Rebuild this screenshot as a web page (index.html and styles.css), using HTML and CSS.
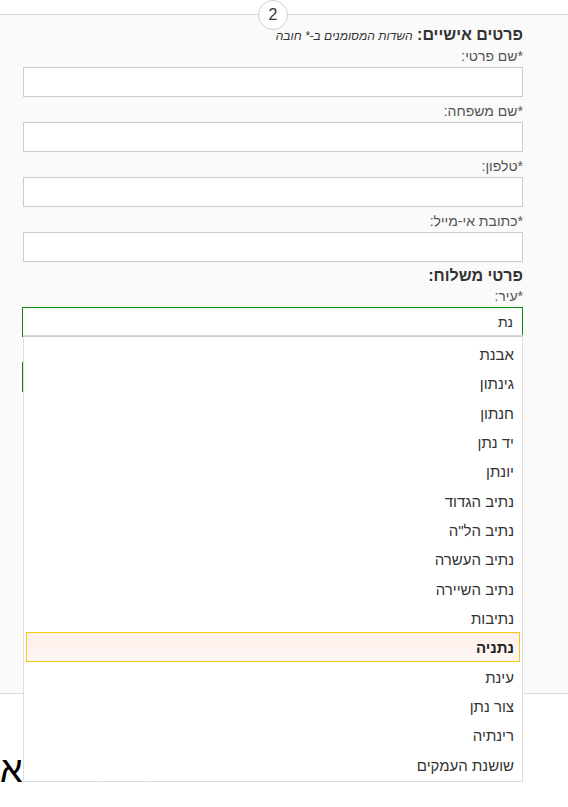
FILE: index.html
```html
<!DOCTYPE html>
<html lang="he" dir="rtl">
<head>
<meta charset="utf-8">
<title>פרטים אישיים</title>
<link rel="stylesheet" href="styles.css">
</head>
<body>
<div class="page">
  <section class="step">
    <div class="step-inner">
      <span class="step-num">2</span>
      <h2 class="group-title">פרטים אישיים: <em>השדות המסומנים ב-* חובה</em></h2>
      <div class="field">
        <label class="field-label">*שם פרטי:</label>
        <input class="field-input" type="text">
      </div>
      <div class="field">
        <label class="field-label">*שם משפחה:</label>
        <input class="field-input" type="text">
      </div>
      <div class="field">
        <label class="field-label">*טלפון:</label>
        <input class="field-input" type="text">
      </div>
      <div class="field">
        <label class="field-label">*כתובת אי-מייל:</label>
        <input class="field-input" type="text">
      </div>
      <h2 class="group-title group-title-second">פרטי משלוח:</h2>
      <div class="field field-city">
        <label class="field-label">*עיר:</label>
        <input class="field-input field-input-valid" type="text" value="נת">
        <ul class="autocomplete">
          <li class="ac-item">אבנת</li>
          <li class="ac-item">גינתון</li>
          <li class="ac-item">חנתון</li>
          <li class="ac-item">יד נתן</li>
          <li class="ac-item">יונתן</li>
          <li class="ac-item">נתיב הגדוד</li>
          <li class="ac-item">נתיב הל"ה</li>
          <li class="ac-item">נתיב העשרה</li>
          <li class="ac-item">נתיב השיירה</li>
          <li class="ac-item">נתיבות</li>
          <li class="ac-item ac-item-active">נתניה</li>
          <li class="ac-item">עינת</li>
          <li class="ac-item">צור נתן</li>
          <li class="ac-item">רינתיה</li>
          <li class="ac-item">שושנת העמקים</li>
        </ul>
      </div>
      <div class="field">
        <span class="field-label"></span>
        <input class="field-input field-input-valid" type="text" aria-label="רחוב">
      </div>
      <div class="field">
        <span class="field-label"></span>
        <input class="field-input" type="text" aria-label="מספר בית">
      </div>
      <div class="field">
        <span class="field-label"></span>
        <input class="field-input" type="text" aria-label="דירה">
      </div>
      <div class="field">
        <span class="field-label"></span>
        <input class="field-input" type="text" aria-label="מיקוד">
      </div>
      <div class="field">
        <span class="field-label"></span>
        <textarea class="field-textarea" aria-label="הערות"></textarea>
      </div>
    </div>
  </section>
  <div class="next-step">לשלב הבא</div>
</div>
</body>
</html>
```
FILE: styles.css
```css
* {
  box-sizing: border-box;
}

html, body {
  margin: 0;
  padding: 0;
  background: #ffffff;
}

body {
  font-family: "Liberation Sans", Arial, "DejaVu Sans", sans-serif;
  color: #333333;
  overflow: hidden;
}

.page {
  padding-top: 14px;
}

.step {
  background: #fafafa;
  border-top: 1px solid #d4d4d4;
  border-bottom: 1px solid #dcdcdc;
}

.step-inner {
  position: relative;
  margin-left: 23px;
  margin-right: 45px;
  padding-top: 10px;
  padding-bottom: 1px;
}

.step-num {
  position: absolute;
  top: -15px;
  left: 50%;
  transform: translateX(-50%);
  width: 30px;
  height: 30px;
  border: 1px solid #d0d0d0;
  border-radius: 50%;
  background: #ffffff;
  display: flex;
  align-items: center;
  justify-content: center;
  font-size: 16px;
  color: #333333;
}

.group-title {
  margin: 0;
  font-size: 16px;
  line-height: 20px;
  font-weight: bold;
  color: #333333;
}

.group-title em {
  font-size: 12px;
  font-weight: normal;
  font-style: italic;
  color: #333333;
}

.group-title-second {
  margin-top: 2px;
}

.field {
  display: flex;
  flex-direction: column;
  margin-bottom: 4px;
}

.field-city {
  position: relative;
}

.field-label {
  display: block;
  height: 21px;
  font-size: 14px;
  line-height: 21px;
  color: #555555;
}

.field-input {
  display: block;
  width: 100%;
  height: 30px;
  margin: 0;
  padding: 0 9px;
  border: 1px solid #cccccc;
  background: #ffffff;
  font-family: inherit;
  font-size: 14px;
  color: #333333;
  outline: none;
}

.field-input-valid {
  border-color: #0a8a0a;
  width: calc(100% + 1px);
  margin-left: -1px;
}

.field-textarea {
  display: block;
  width: 100%;
  height: 106px;
  margin: 0;
  border: 1px solid #cccccc;
  background: #ffffff;
  resize: none;
}

.autocomplete {
  position: absolute;
  top: calc(100% - 1px);
  left: 0;
  width: 500px;
  margin: 0;
  padding: 2px;
  list-style: none;
  background: #ffffff;
  border: 1px solid #dddddd;
  border-top-color: #cccccc;
  box-shadow: 0 -1px 0 #d8d8d8;
  z-index: 10;
}

.ac-item {
  padding: 4px 5px 2px;
  border: 1px solid transparent;
  font-size: 15px;
  line-height: 21.33px;
  color: #333333;
}

.ac-item-active {
  border-color: #f6c915;
  background: linear-gradient(#fdf0ec, #fff6f3);
  font-weight: bold;
  color: #222222;
}

.next-step {
  margin-top: 55px;
  text-align: left;
  font-size: 36px;
  line-height: 42px;
  color: #000000;
  white-space: nowrap;
}
```
